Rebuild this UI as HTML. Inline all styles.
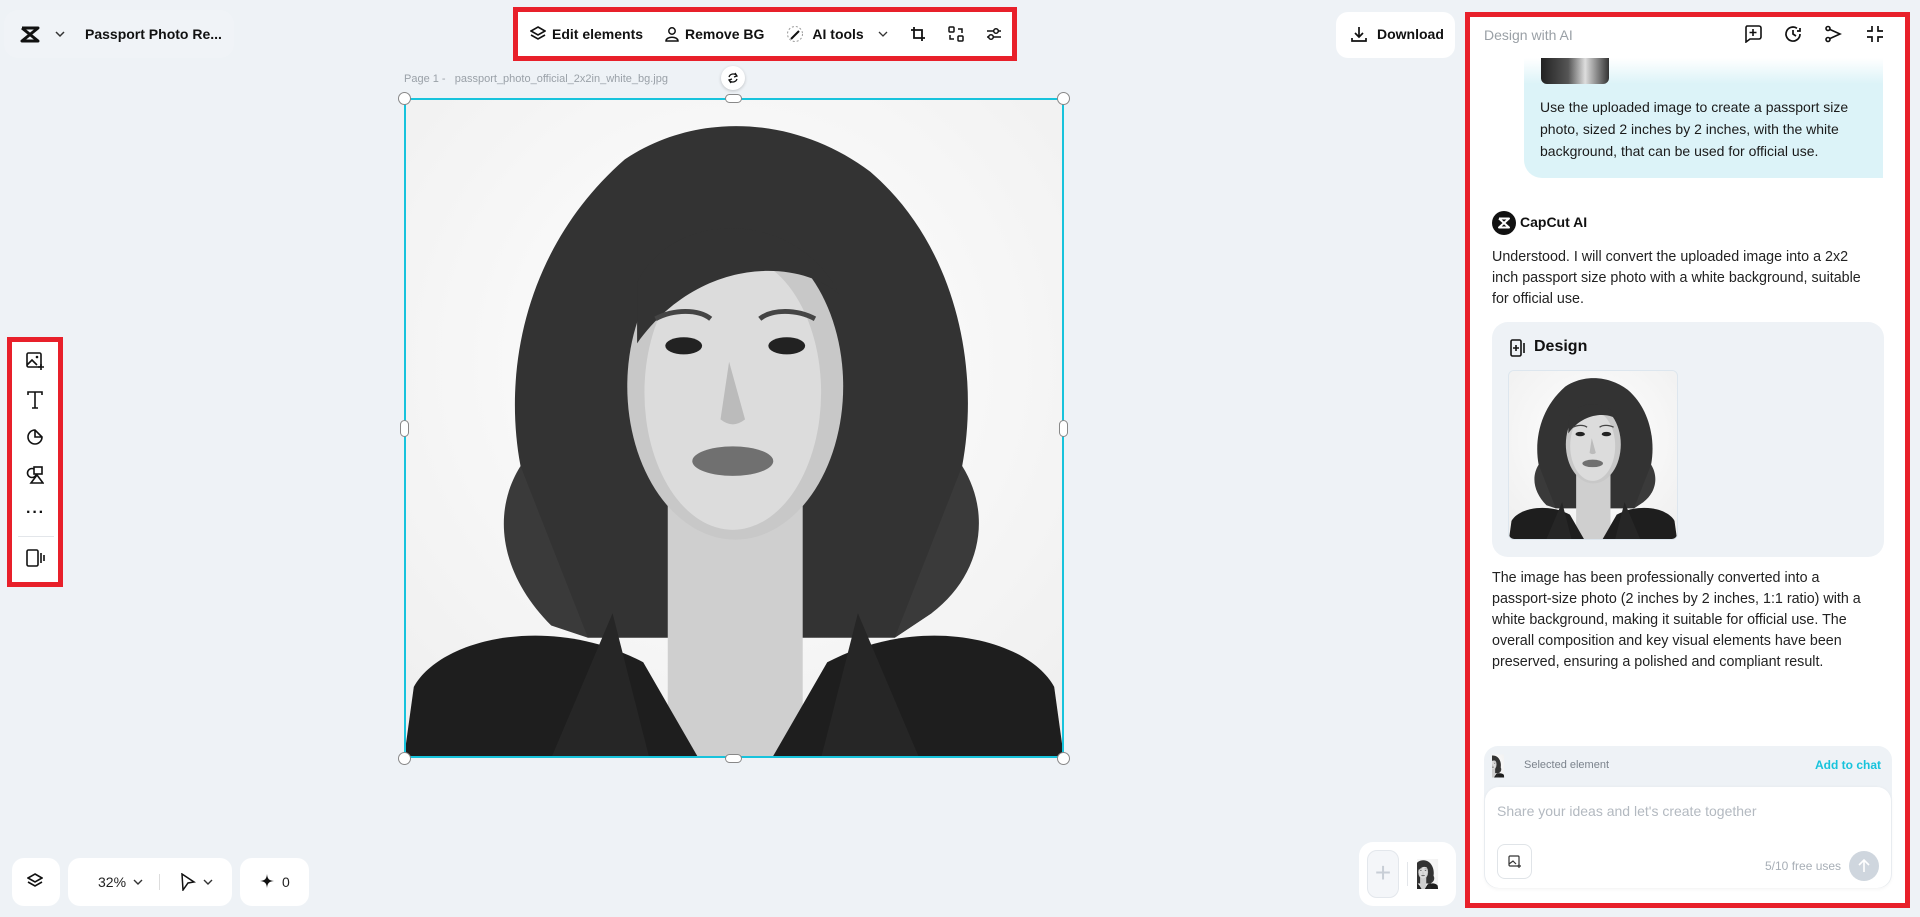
<!DOCTYPE html>
<html><head><meta charset="utf-8">
<style>
*{box-sizing:border-box;margin:0;padding:0}
body{width:1920px;height:917px;background:#eef2f6;font-family:"Liberation Sans",sans-serif;position:relative;overflow:hidden;color:#111}
.abs{position:absolute}
.red{border:5px solid #e8202a}
svg{display:block}
.txt{font-size:14.3px;line-height:21px;color:#222;white-space:nowrap}
</style></head><body>

<svg width="0" height="0" style="position:absolute">
<defs>
<radialGradient id="bgg" cx="50%" cy="40%" r="70%"><stop offset="0" stop-color="#fff"/><stop offset="1" stop-color="#f0f0f0"/></radialGradient>
<symbol id="pt" viewBox="0 0 538 538">
<rect width="538" height="538" fill="url(#bgg)"/>
<path d="M95 300 C80 220 100 120 180 50 C240 10 320 15 380 60 C450 120 470 220 455 300 C450 340 470 380 430 420 L400 440 L150 440 C110 420 100 360 95 300Z" fill="#333"/>
<path d="M95 300 C70 340 80 390 120 430 L150 440 Z M455 300 C480 340 470 390 430 420 L400 440Z" fill="#3a3a3a"/>
<rect x="215" y="330" width="110" height="208" fill="#cfcfcf"/>
<ellipse cx="270" cy="235" rx="88" ry="125" fill="#c8c8c8"/>
<ellipse cx="268" cy="240" rx="72" ry="112" fill="#dcdcdc"/>
<path d="M190 150 C220 90 320 90 355 160 C320 130 240 130 190 200Z" fill="#333"/>
<path d="M205 180 C220 172 240 172 250 180" stroke="#444" stroke-width="4" fill="none"/>
<path d="M290 180 C300 172 320 172 335 180" stroke="#444" stroke-width="4" fill="none"/>
<ellipse cx="228" cy="202" rx="15" ry="7" fill="#222"/>
<ellipse cx="312" cy="202" rx="15" ry="7" fill="#222"/>
<path d="M265 215 L258 262 Q268 270 278 262Z" fill="#bbb"/>
<ellipse cx="268" cy="296" rx="33" ry="12" fill="#707070"/>
<path d="M0 538 L8 480 C30 440 120 420 195 460 L240 538Z" fill="#1e1e1e"/>
<path d="M538 538 L530 480 C508 440 420 420 345 460 L300 538Z" fill="#1e1e1e"/>
<path d="M170 420 L200 538 L120 538Z M370 420 L340 538 L420 538Z" fill="#262626"/>
</symbol>
</defs></svg>

<!-- top left -->
<div class="abs" style="left:4px;top:10px;width:230px;height:48px;background:#f0f3f7;border-radius:14px"></div>
<svg class="abs" style="left:19px;top:26px" width="22" height="17" viewBox="0 0 22 17"><path d="M3 2 H19 L3 15 H19 L3 2" stroke="#111" stroke-width="3" fill="none" stroke-linejoin="round"/></svg>
<svg class="abs" style="left:55px;top:31px" width="10" height="7" viewBox="0 0 10 7"><path d="M1 1 L5 5 L9 1" stroke="#333" stroke-width="1.5" fill="none"/></svg>
<div class="abs" style="left:85px;top:26px;font-size:14px;font-weight:bold;color:#111">Passport Photo Re...</div>

<!-- top toolbar -->
<div class="abs red" style="left:513px;top:7px;width:504px;height:54px;background:#fff"></div>
<div class="abs" style="left:530px;top:25px;font-size:14px;font-weight:bold;display:flex;align-items:center;gap:0">
<svg width="16" height="16" viewBox="0 0 16 16"><path d="M8 1 L15 5 L8 9 L1 5Z M1 9 L8 13 L15 9" stroke="#111" stroke-width="1.6" fill="none"/></svg>
<span style="margin-left:6px">Edit elements</span>
<svg style="margin-left:22px" width="14" height="16" viewBox="0 0 14 16"><circle cx="7" cy="5" r="3.2" stroke="#111" stroke-width="1.5" fill="none"/><path d="M1 15 C1 10 13 10 13 15Z" stroke="#111" stroke-width="1.5" fill="none"/></svg>
<span style="margin-left:6px">Remove BG</span>
<svg style="margin-left:22px" width="18" height="18" viewBox="0 0 18 18"><circle cx="9" cy="9" r="7.5" stroke="#999" stroke-dasharray="2 2" fill="none"/><path d="M5 14 L13 6" stroke="#111" stroke-width="2"/></svg>
<span style="margin-left:8px">AI tools</span>
<svg style="margin-left:14px" width="10" height="7" viewBox="0 0 10 7"><path d="M1 1 L5 5 L9 1" stroke="#333" stroke-width="1.3" fill="none"/></svg>
<svg style="margin-left:22px" width="16" height="16" viewBox="0 0 16 16"><path d="M4 1 V12 H15 M1 4 H12 V15" stroke="#111" stroke-width="1.8" fill="none"/></svg>
<svg style="margin-left:22px" width="16" height="16" viewBox="0 0 16 16"><rect x="1" y="1" width="5" height="5" rx="1" stroke="#111" stroke-width="1.5" fill="none"/><rect x="10" y="10" width="5" height="5" rx="1" stroke="#111" stroke-width="1.5" fill="none"/><path d="M10 3 H14 V7 M6 13 H2 V9" stroke="#111" stroke-width="1.5" fill="none"/></svg>
<svg style="margin-left:22px" width="16" height="16" viewBox="0 0 16 16"><path d="M1 5 H15 M1 11 H15" stroke="#111" stroke-width="1.5"/><circle cx="10" cy="5" r="2.3" fill="#fff" stroke="#111" stroke-width="1.5"/><circle cx="5" cy="11" r="2.3" fill="#fff" stroke="#111" stroke-width="1.5"/></svg>
</div>

<!-- download -->
<div class="abs" style="left:1336px;top:12px;width:119px;height:46px;background:#fff;border-radius:12px"></div>
<svg class="abs" style="left:1351px;top:26px" width="16" height="16" viewBox="0 0 16 16"><path d="M8 1 V11 M4 7 L8 11 L12 7 M1 12 V15 H15 V12" stroke="#111" stroke-width="1.7" fill="none"/></svg>
<div class="abs" style="left:1377px;top:26px;font-size:14px;font-weight:bold">Download</div>

<!-- page label -->
<div class="abs" style="left:404px;top:73px;font-size:11px;color:#9aa1a8">Page 1 -&nbsp;&nbsp; passport_photo_official_2x2in_white_bg.jpg</div>
<div class="abs" style="left:721px;top:66px;width:24px;height:24px;border-radius:50%;background:#fff;box-shadow:0 1px 3px rgba(0,0,0,.2)"></div>
<svg class="abs" style="left:727px;top:72px" width="12" height="12" viewBox="0 0 12 12"><path d="M10 4 A4.5 4.5 0 0 0 2 5 M2 8 A4.5 4.5 0 0 0 10 7 M8 1 L10 4 L7 5 M4 11 L2 8 L5 7" stroke="#111" stroke-width="1.3" fill="none"/></svg>

<!-- canvas photo -->
<svg class="abs" style="left:404px;top:98px" width="660" height="660"><use href="#pt"/></svg>
<div class="abs" style="left:404px;top:98px;width:660px;height:660px;border:2px solid #17c3dc"></div>
<div class="abs" style="left:398px;top:92px;width:13px;height:13px;border-radius:50%;background:#fff;border:1px solid #888"></div>
<div class="abs" style="left:1057px;top:92px;width:13px;height:13px;border-radius:50%;background:#fff;border:1px solid #888"></div>
<div class="abs" style="left:398px;top:752px;width:13px;height:13px;border-radius:50%;background:#fff;border:1px solid #888"></div>
<div class="abs" style="left:1057px;top:752px;width:13px;height:13px;border-radius:50%;background:#fff;border:1px solid #888"></div>
<div class="abs" style="left:725px;top:94px;width:17px;height:9px;border-radius:5px;background:#fff;border:1px solid #888"></div>
<div class="abs" style="left:725px;top:754px;width:17px;height:9px;border-radius:5px;background:#fff;border:1px solid #888"></div>
<div class="abs" style="left:400px;top:420px;width:9px;height:17px;border-radius:5px;background:#fff;border:1px solid #888"></div>
<div class="abs" style="left:1059px;top:420px;width:9px;height:17px;border-radius:5px;background:#fff;border:1px solid #888"></div>

<!-- left toolbar -->
<div class="abs red" style="left:7px;top:337px;width:56px;height:250px;background:#fff"></div>
<svg class="abs" style="left:25px;top:351px" width="20" height="20" viewBox="0 0 20 20"><rect x="2" y="2" width="14" height="14" rx="1.5" stroke="#111" stroke-width="1.6" fill="none"/><path d="M2 14 L7 9 L12 14" stroke="#111" stroke-width="1.6" fill="none"/><circle cx="12" cy="6" r="1.3" fill="#111"/><path d="M16 13 V19 M13 16 H19" stroke="#111" stroke-width="1.6"/></svg>
<svg class="abs" style="left:27px;top:391px" width="16" height="18" viewBox="0 0 16 18"><path d="M1 4 V1 H15 V4 M8 1 V17 M5 17 H11" stroke="#111" stroke-width="1.6" fill="none"/></svg>
<svg class="abs" style="left:26px;top:428px" width="18" height="18" viewBox="0 0 18 18"><path d="M16 9 A7 7 0 1 1 9 2 L16 9Z M9 2 V9 H16" stroke="#111" stroke-width="1.6" fill="none"/></svg>
<svg class="abs" style="left:26px;top:466px" width="18" height="18" viewBox="0 0 18 18"><circle cx="6" cy="7" r="4.5" stroke="#111" stroke-width="1.6" fill="none"/><rect x="8" y="1" width="8" height="7" stroke="#111" stroke-width="1.6" fill="#fff"/><path d="M11 9 L17 17 H5Z" stroke="#111" stroke-width="1.6" fill="#fff"/></svg>
<div class="abs" style="left:26px;top:504px;font-size:16px;font-weight:bold;letter-spacing:1px">···</div>
<div class="abs" style="left:18px;top:536px;width:36px;height:1px;background:#e3e6ea"></div>
<svg class="abs" style="left:26px;top:549px" width="20" height="18" viewBox="0 0 20 18"><rect x="1" y="1" width="11" height="16" rx="1.5" stroke="#111" stroke-width="1.6" fill="none"/><path d="M15 4 V14 M18 6 V12" stroke="#111" stroke-width="1.6"/></svg>

<!-- bottom left -->
<div class="abs" style="left:12px;top:858px;width:48px;height:48px;background:#fff;border-radius:12px"></div>
<svg class="abs" style="left:27px;top:873px" width="16" height="16" viewBox="0 0 16 16"><path d="M8 1 L15 5 L8 9 L1 5Z M1 9 L8 13 L15 9" stroke="#111" stroke-width="1.6" fill="none"/></svg>
<div class="abs" style="left:68px;top:858px;width:164px;height:48px;background:#fff;border-radius:12px"></div>
<div class="abs" style="left:98px;top:874px;font-size:14px;color:#222">32%</div>
<svg class="abs" style="left:133px;top:879px" width="10" height="7" viewBox="0 0 10 7"><path d="M1 1 L5 5 L9 1" stroke="#333" stroke-width="1.4" fill="none"/></svg>
<div class="abs" style="left:159px;top:874px;width:1px;height:16px;background:#ddd"></div>
<svg class="abs" style="left:180px;top:873px" width="16" height="18" viewBox="0 0 16 18"><path d="M2 1 L14 9 L8 10 L3 17Z" stroke="#111" stroke-width="1.5" fill="none"/></svg>
<svg class="abs" style="left:203px;top:879px" width="10" height="7" viewBox="0 0 10 7"><path d="M1 1 L5 5 L9 1" stroke="#333" stroke-width="1.4" fill="none"/></svg>
<div class="abs" style="left:240px;top:858px;width:69px;height:48px;background:#fff;border-radius:12px"></div>
<svg class="abs" style="left:260px;top:874px" width="14" height="14" viewBox="0 0 14 14"><path d="M7 0 C7.5 5 9 6.5 14 7 C9 7.5 7.5 9 7 14 C6.5 9 5 7.5 0 7 C5 6.5 6.5 5 7 0Z" fill="#111"/></svg>
<div class="abs" style="left:282px;top:874px;font-size:14px;color:#222">0</div>

<!-- bottom right avatar -->
<div class="abs" style="left:1359px;top:842px;width:97px;height:64px;background:#fff;border-radius:14px"></div>
<div class="abs" style="left:1367px;top:850px;width:32px;height:48px;background:#f4f6f9;border:1px solid #e3e7ec;border-radius:10px;color:#c8ced6;font-size:28px;text-align:center;line-height:44px">+</div>
<div class="abs" style="left:1407px;top:862px;width:1px;height:24px;background:#e3e6ea"></div>
<svg class="abs" style="left:1417px;top:851px;border-radius:6px" width="30" height="46" viewBox="100 0 338 538" preserveAspectRatio="xMidYMid slice"><use href="#pt"/></svg>

<!-- right panel -->
<div class="abs red" style="left:1465px;top:12px;width:445px;height:896px;background:#fff"></div>
<div class="abs" style="left:1484px;top:27px;font-size:14px;color:#9aa0a6">Design with AI</div>
<svg class="abs" style="left:1744px;top:25px" width="18" height="18" viewBox="0 0 18 18"><path d="M3 1 H15 A2 2 0 0 1 17 3 V12 A2 2 0 0 1 15 14 H6 L2 17 V3 A2 2 0 0 1 3 1Z M9 4 V11 M5.5 7.5 H12.5" stroke="#111" stroke-width="1.6" fill="none"/></svg>
<svg class="abs" style="left:1784px;top:25px" width="18" height="18" viewBox="0 0 18 18"><path d="M16 9 A7 7 0 1 1 13 3.3 M9 5 V9 L12 11 M16 3 V6 H13" stroke="#111" stroke-width="1.7" fill="none"/></svg>
<svg class="abs" style="left:1825px;top:25px" width="18" height="18" viewBox="0 0 18 18"><circle cx="3" cy="3.5" r="2" stroke="#111" stroke-width="1.6" fill="none"/><circle cx="3" cy="14.5" r="2" stroke="#111" stroke-width="1.6" fill="none"/><path d="M5 4.5 L15 9 L5 13.5" stroke="#111" stroke-width="1.6" fill="none"/></svg>
<svg class="abs" style="left:1866px;top:25px" width="18" height="18" viewBox="0 0 18 18"><path d="M1 6 H6 V1 M12 1 V6 H17 M1 12 H6 V17 M12 17 V12 H17" stroke="#111" stroke-width="1.7" fill="none"/></svg>

<div class="abs" style="left:1524px;top:58px;width:359px;height:120px;border-radius:0 0 0 18px;background:linear-gradient(#fff 0px,#dcf3f8 26px,#dcf3f8)"></div>
<div class="abs" style="left:1541px;top:58px;width:68px;height:26px;border-radius:0 0 6px 6px;background:linear-gradient(90deg,#222,#555 40%,#ddd 65%,#333)"></div>
<div class="abs txt" style="left:1540px;top:96px;line-height:22px;color:#1a1a1a;font-size:14px">Use the uploaded image to create a passport size<br>photo, sized 2 inches by 2 inches, with the white<br>background, that can be used for official use.</div>

<div class="abs" style="left:1492px;top:211px;width:24px;height:24px;border-radius:50%;background:#111"></div>
<svg class="abs" style="left:1497px;top:217px" width="14" height="12" viewBox="0 0 14 12"><path d="M2 1.5 H12 L2 10.5 H12 L2 1.5" stroke="#fff" stroke-width="2" fill="none" stroke-linejoin="round"/></svg>
<div class="abs" style="left:1520px;top:214px;font-size:14px;font-weight:bold">CapCut AI</div>

<div class="abs txt" style="left:1492px;top:247px">Understood. I will convert the uploaded image into a 2x2<br>inch passport size photo with a white background, suitable<br>for official use.</div>

<div class="abs" style="left:1492px;top:322px;width:392px;height:235px;border-radius:16px;background:#eef2f6"></div>
<svg class="abs" style="left:1510px;top:339px" width="16" height="18" viewBox="0 0 16 18"><rect x="1" y="1" width="10" height="16" rx="1.5" stroke="#111" stroke-width="1.6" fill="none"/><path d="M6 6 V12 M3 9 H9 M14 4 V14" stroke="#111" stroke-width="1.6"/></svg>
<div class="abs" style="left:1534px;top:338px;font-size:16px;font-weight:bold">Design</div>
<svg class="abs" style="left:1508px;top:370px;border-radius:6px;border:1px solid #dde6ee" width="170" height="170"><use href="#pt"/></svg>

<div class="abs txt" style="left:1492px;top:568px">The image has been professionally converted into a<br>passport-size photo (2 inches by 2 inches, 1:1 ratio) with a<br>white background, making it suitable for official use. The<br>overall composition and key visual elements have been<br>preserved, ensuring a polished and compliant result.</div>

<div class="abs" style="left:1484px;top:746px;width:408px;height:142px;border-radius:14px;background:#eef2f6"></div>
<svg class="abs" style="left:1492px;top:754px" width="23" height="24" viewBox="130 0 278 538" preserveAspectRatio="xMidYMid slice"><use href="#pt"/></svg>
<div class="abs" style="left:1524px;top:759px;font-size:11px;color:#7b838c">Selected element</div>
<div class="abs" style="left:1815px;top:758px;font-size:12px;font-weight:bold;color:#17c3dc">Add to chat</div>
<div class="abs" style="left:1485px;top:787px;width:406px;height:101px;border-radius:14px;background:#fff;box-shadow:0 1px 4px rgba(0,0,0,.06)"></div>
<div class="abs" style="left:1497px;top:803px;font-size:14px;color:#b3b9c0">Share your ideas and let's create together</div>
<div class="abs" style="left:1497px;top:844px;width:35px;height:35px;border:1px solid #e0e4e8;border-radius:8px"></div>
<svg class="abs" style="left:1508px;top:855px" width="14" height="14" viewBox="0 0 14 14"><rect x="1" y="1" width="10" height="10" rx="1" stroke="#333" stroke-width="1.2" fill="none"/><path d="M1 9 L5 6 L8 9 M11 9 V13 M9 11 H13" stroke="#333" stroke-width="1.2" fill="none"/></svg>
<div class="abs" style="left:1765px;top:859px;font-size:12px;color:#a7aeb6">5/10 free uses</div>
<div class="abs" style="left:1849px;top:851px;width:30px;height:30px;border-radius:50%;background:#cfd6de"></div>
<svg class="abs" style="left:1858px;top:859px" width="12" height="14" viewBox="0 0 12 14"><path d="M6 13 V2 M1 6 L6 1 L11 6" stroke="#fff" stroke-width="1.6" fill="none"/></svg>

</body></html>
